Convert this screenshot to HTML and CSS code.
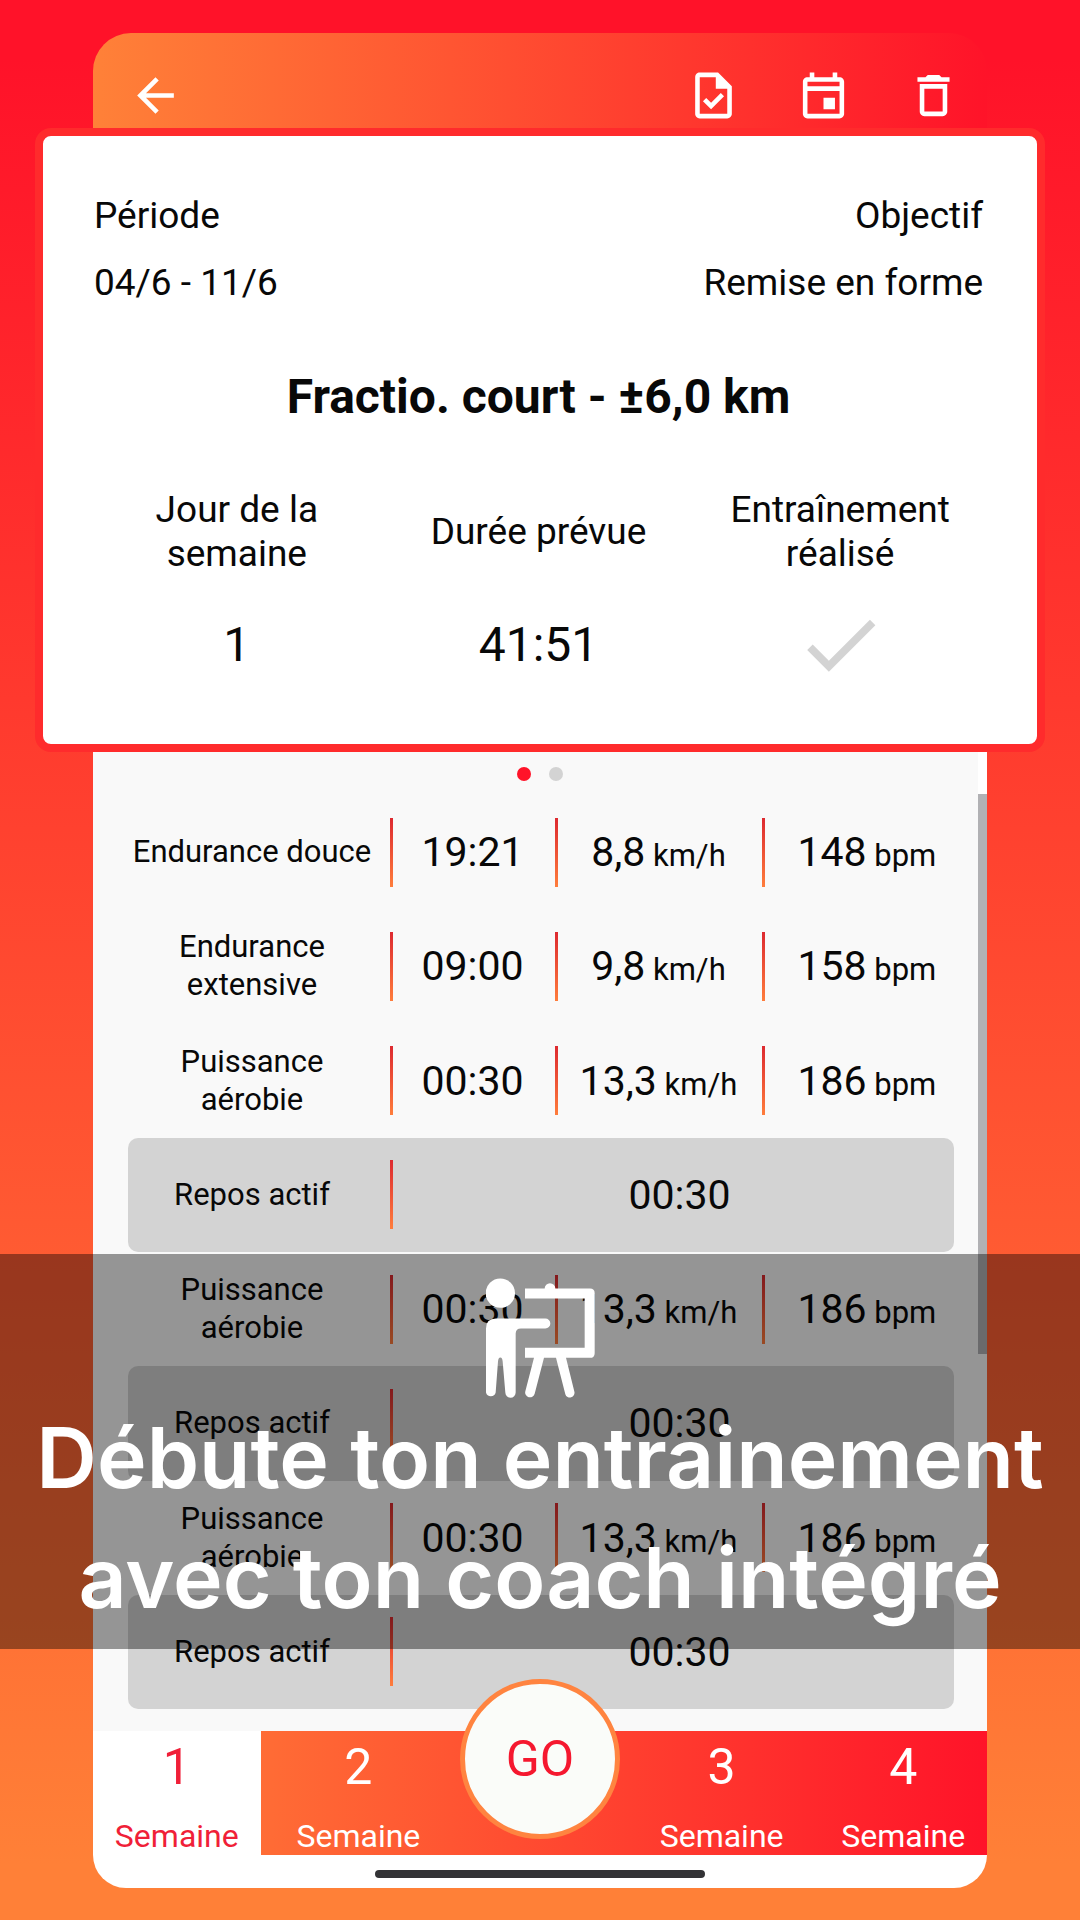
FILE: index.html
```
<!DOCTYPE html>
<html lang="fr">
<head>
  <meta charset="UTF-8">
  <title>Entraînement</title>
  <meta name="viewport" content="width=device-width, initial-scale=1.0">
  <link rel="stylesheet" href="styles.css">
</head>
<body>

  <main class="phone">
    <header>
      <a href="#" class="icon-button" aria-label="Retour">
        <svg viewBox="0 0 24 24"><path d="M20 11H7.83l5.59-5.59L12 4l-8 8 8 8 1.41-1.41L7.83 13H20v-2z"/></svg>
      </a>
      <div class="actions">
        <button class="icon-button" aria-label="Valider">
          <svg viewBox="0 0 24 24"><path d="M14 2H6c-1.1 0-1.99.9-1.99 2L4 20c0 1.1.89 2 1.99 2H18c1.1 0 2-.9 2-2V8l-6-6zm4 18H6V4h7v5h5v11zM8.82 13.05L7.4 14.46 10.94 18l5.66-5.66-1.41-1.41-4.24 4.24-2.13-2.12z"/></svg>
        </button>
        <button class="icon-button" aria-label="Calendrier">
          <svg viewBox="0 0 24 24"><path d="M19 4h-1V2h-2v2H8V2H6v2H5c-1.11 0-1.99.9-1.99 2L3 20c0 1.1.89 2 2 2h14c1.1 0 2-.9 2-2V6c0-1.1-.9-2-2-2zm0 16H5V10h14v10zm0-12H5V6h14v2zm-7 5h5v5h-5z"/></svg>
        </button>
        <button class="icon-button" aria-label="Supprimer">
          <svg viewBox="0 0 24 24"><path d="M16 9v10H8V9h8m-1.5-6h-5l-1 1H5v2h14V4h-3.5l-1-1zM18 7H6v12c0 1.1.9 2 2 2h8c1.1 0 2-.9 2-2V7z"/></svg>
        </button>
      </div>
    </header>

    <section class="card">
      <div class="card-line">
        <span>Période</span>
        <span>Objectif</span>
      </div>
      <div class="card-line">
        <span>04/6 - 11/6</span>
        <span>Remise en forme</span>
      </div>
      <h1>Fractio. court - ±6,0 km</h1>
      <div class="stats">
        <div class="stat-label">Jour de la<br>semaine</div>
        <div class="stat-label">Durée prévue</div>
        <div class="stat-label">Entraînement<br>réalisé</div>
        <div class="stat-value">1</div>
        <div class="stat-value">41:51</div>
        <button class="done-button" aria-label="Entraînement réalisé">
          <svg viewBox="0 0 24 24"><path d="M9 16.17L4.83 12l-1.42 1.41L9 19 21 7l-1.41-1.41z"/></svg>
        </button>
      </div>
    </section>

    <section class="session">
      <div class="dots">
        <span class="dot active"></span>
        <span class="dot"></span>
      </div>

      <table class="steps">
        <colgroup>
          <col class="col-name">
          <col class="col-time">
          <col class="col-speed">
          <col class="col-heart">
        </colgroup>
        <tbody>
          <tr>
            <th>Endurance douce</th>
            <td>19:21</td>
            <td>8,8<small> km/h</small></td>
            <td class="heart">148<small> bpm</small></td>
          </tr>
          <tr>
            <th>Endurance<br>extensive</th>
            <td>09:00</td>
            <td>9,8<small> km/h</small></td>
            <td class="heart">158<small> bpm</small></td>
          </tr>
          <tr>
            <th>Puissance<br>aérobie</th>
            <td>00:30</td>
            <td>13,3<small> km/h</small></td>
            <td class="heart">186<small> bpm</small></td>
          </tr>
          <tr class="rest">
            <th>Repos actif</th>
            <td colspan="3">00:30</td>
          </tr>
          <tr>
            <th>Puissance<br>aérobie</th>
            <td>00:30</td>
            <td>13,3<small> km/h</small></td>
            <td class="heart">186<small> bpm</small></td>
          </tr>
          <tr class="rest">
            <th>Repos actif</th>
            <td colspan="3">00:30</td>
          </tr>
          <tr>
            <th>Puissance<br>aérobie</th>
            <td>00:30</td>
            <td>13,3<small> km/h</small></td>
            <td class="heart">186<small> bpm</small></td>
          </tr>
          <tr class="rest">
            <th>Repos actif</th>
            <td colspan="3">00:30</td>
          </tr>
        </tbody>
      </table>

      <div class="scrollbar"></div>

      <div class="banner">
        <svg viewBox="145 110 327 359">
          <circle cx="188" cy="155" r="44"/>
          <path d="M145 261q0-30 30-30h148a14 14 0 0 1 0 30H250q-16 0-16 16V453a15 15 0 0 1-31 0L195 360q-1-12-7-12t-7 12L174 453a15 15 0 0 1-29 0z"/>
          <path d="M262 141H321a16 16 0 0 1 32 0H457q14 0 14 14V335q0 14-14 14H385L410 450a14 14 0 0 1-27 8L355 349H319L291 457a14 14 0 0 1-28-8L289 349H262V319H441V171H262z"/>
        </svg>
        <p>Débute ton entrainement<br>avec ton coach intégré</p>
      </div>
    </section>

    <nav class="weeks">
      <button class="week active"><b>1</b><span>Semaine</span></button>
      <button class="week"><b>2</b><span>Semaine</span></button>
      <button class="go">GO</button>
      <button class="week"><b>3</b><span>Semaine</span></button>
      <button class="week"><b>4</b><span>Semaine</span></button>
    </nav>
    <footer>
      <div class="home-bar"></div>
    </footer>
  </main>

</body>
</html>
```
FILE: styles.css
```
* {
  margin: 0;
  padding: 0;
  box-sizing: border-box;
}

body {
  min-height: 100vh;
  padding: 33px 93px;
  font-family: Roboto, "Liberation Sans", sans-serif;
  color: #080808;
  background: linear-gradient(#ff1229 3%, #ff8037 97%);
}

button {
  font-family: inherit;
  color: inherit;
  background: none;
  border: none;
  cursor: pointer;
}

svg {
  display: block;
  fill: currentColor;
}

header {
  display: flex;
  justify-content: space-between;
  padding: 35px 26px 5px 35px;
  color: white;
  border-radius: 38px 38px 0 0;
  background: linear-gradient(to right, #ff8138, #ff1329);
}

.icon-button {
  color: white;
}

.icon-button svg {
  width: 55px;
  height: 55px;
}

.actions {
  display: flex;
  gap: 55px;
}

/* summary card, wider than the phone */
.card {
  position: relative;
  margin: 0 -58px;
  padding: 58px 54px 53px 51px;
  background-color: white;
  border: 8px solid #ff2b2c;
  border-radius: 16px;
}

.card-line {
  display: flex;
  justify-content: space-between;
  margin-bottom: 23px;
  font-size: 37px;
  line-height: 44px;
}

h1 {
  margin: 64px 0 63px;
  font-size: 48px;
  line-height: 56px;
  text-align: center;
}

.stats {
  display: grid;
  grid-template-columns: repeat(3, 1fr);
  row-gap: 22px;
  margin: 0 -8px;
  align-items: center;
  justify-items: center;
  text-align: center;
}

.stat-label {
  font-size: 37px;
  line-height: 44px;
}

.stat-value {
  font-size: 48px;
  line-height: 56px;
}

.done-button {
  color: #d3d3d3;
}

.done-button svg {
  width: 93px;
  height: 93px;
}

.session {
  position: relative;
  background-color: #f9f9f9;
  padding-bottom: 22px;
}

.dots {
  display: flex;
  justify-content: center;
  gap: 18px;
  padding: 15px 0 14px;
  box-shadow: inset -9px 0 white;
}

.dot {
  width: 14px;
  height: 14px;
  border-radius: 50%;
  background-color: #d3d3d3;
}

.dot.active {
  background-color: #ff1329;
}

.steps {
  width: calc(100% - 68px);
  height: 914px;
  margin: 0 33px 0 35px;
  table-layout: fixed;
  border-collapse: separate;
  border-spacing: 0;
  text-align: center;
}

.steps tr {
  height: 114px;
}

.col-name {
  width: 262px;
}

.col-time {
  width: 20%;
}

.col-speed {
  width: 25%;
}

.steps th {
  padding-right: 14px;
  font-size: 31px;
  line-height: 38px;
  font-weight: normal;
}

.steps td {
  font-size: 41px;
  background: linear-gradient(#dd2a30, #ff7d3c) left center / 3px 69px no-repeat;
}

.steps small {
  font-size: 31px;
}

.steps .heart {
  padding-left: 18px;
}

.steps .rest th {
  background-color: #d3d3d3;
  border-radius: 10px 0 0 10px;
}

.steps .rest td {
  padding-left: 15px;
  background-color: #d3d3d3;
  border-radius: 0 10px 10px 0;
}

.scrollbar {
  position: absolute;
  top: 42px;
  right: 0;
  width: 9px;
  height: 560px;
  background-color: #b1b1b4;
}

.banner {
  position: absolute;
  left: -93px;
  right: -93px;
  bottom: 82px;
  padding: 24px 0 11px;
  color: white;
  text-align: center;
  background-color: rgba(0, 0, 0, 0.4);
}

.banner svg {
  width: 109px;
  height: 120px;
  margin: 0 auto;
}

.banner p {
  font-family: Inter, sans-serif;
  font-size: 84px;
  font-weight: 600;
  line-height: 120px;
}

.weeks {
  display: grid;
  grid-template-columns: repeat(5, 1fr);
  column-gap: 14px;
  color: white;
  background: linear-gradient(to right, #ff8138, #ff1329);
}

.week {
  display: flex;
  flex-direction: column;
  align-items: center;
  gap: 21px;
  padding-top: 7px;
}

.week b {
  font-size: 50px;
  font-weight: normal;
  line-height: 58px;
}

.week span {
  font-size: 32px;
  line-height: 38px;
}

.week.active {
  color: #f01f38;
  background-color: white;
}

.go {
  position: relative;
  justify-self: center;
  width: 160px;
  height: 160px;
  margin: -52px 0 16px;
  font-size: 50px;
  color: #f5182f;
  background-color: #fafcf9;
  border: 5px solid #ff8440;
  border-radius: 50%;
}

footer {
  padding: 15px 0 10px;
  background-color: white;
  border-radius: 0 0 38px 38px;
}

.home-bar {
  width: 37%;
  height: 8px;
  margin: 0 auto;
  background-color: #333336;
  border-radius: 4px;
}
```
